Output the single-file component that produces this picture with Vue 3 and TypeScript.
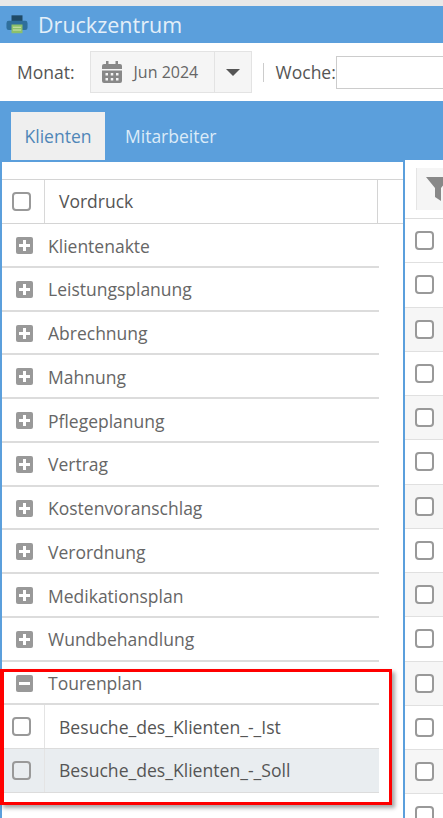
<template>
  <div class="page">
    <div class="title-bar">
      <svg class="printer" width="22" height="21" viewBox="0 0 24 22">
        <rect x="6" y="1" width="12" height="8" fill="#1f4a66" />
        <path d="M3 7h18a2.500 2.500 0 0 1 2.500 2.500v5a2.500 2.500 0 0 1-2.500 2.500H3a2.500 2.500 0 0 1-2.500-2.500v-5A2.500 2.500 0 0 1 3 7z" fill="#2f6f9c" />
        <rect x="6" y="11" width="12" height="9.500" fill="#8cc06a" />
        <path d="M7.500 14h9M7.500 17h9" stroke="#d5e8b5" stroke-width="1" />
      </svg>
      <span class="title">Druckzentrum</span>
    </div>

    <div class="filter-bar">
      <label class="filter-label">Monat:</label>
      <div class="month-picker">
        <div class="month-value">
          <svg width="20" height="22" viewBox="0 0 20 22" fill="#888">
            <path d="M4 0h2.500v3h7V0H16v3h2a2 2 0 0 1 2 2v3H0V5a2 2 0 0 1 2-2h2z" />
            <path fill-rule="evenodd" d="M0 9.500h20V20a2 2 0 0 1-2 2H2a2 2 0 0 1-2-2zM3.500 12v2.500H6V12zm5.250 0v2.500h2.500V12zM14 12v2.500h2.500V12zM3.500 17v2.500H6V17zm5.250 0v2.500h2.500V17zM14 17v2.500h2.500V17z" />
          </svg>
          <span>Jun 2024</span>
        </div>
        <div class="month-toggle"><span class="caret"></span></div>
      </div>
      <span class="separator"></span>
      <label class="filter-label week-label">Woche:</label>
      <input class="week-input" type="text" />
    </div>

    <div class="tab-bar">
      <div class="tab active">Klienten</div>
      <div class="tab">Mitarbeiter</div>
    </div>

    <div class="content">
      <div class="left-panel">
        <div class="grid-head">
          <div class="check-cell"><span class="check"></span></div>
          <div class="head-title">Vordruck</div>
          <div class="head-end"></div>
        </div>

        <div v-for="group in groups" :key="group" class="group-row">
          <span class="toggle">
            <span class="bar-h"></span>
            <span class="bar-v"></span>
          </span>
          <span>{{ group }}</span>
        </div>

        <div class="group-row">
          <span class="toggle"><span class="bar-h"></span></span>
          <span>Tourenplan</span>
        </div>
        <div
          v-for="(item, index) in items"
          :key="item"
          class="item-row"
          :class="{ hovered: index === 1 }"
        >
          <div class="check-cell"><span class="check"></span></div>
          <div class="item-name">{{ item }}</div>
        </div>

        <div class="highlight-box"></div>
      </div>

      <div class="right-panel">
        <div class="toolbar">
          <div class="filter-btn">
            <svg width="24" height="24" viewBox="0 0 24 24" fill="#888">
              <path d="M0 0h24L15 11v13l-6-4V11z" />
            </svg>
          </div>
        </div>
        <div v-for="n in 14" :key="n" class="right-row" :class="{ striped: n > 2 && n % 2 === 1 }">
          <span class="check"></span>
        </div>
      </div>
    </div>
  </div>
</template>

<script setup lang="ts">
const groups: string[] = [
  'Klientenakte',
  'Leistungsplanung',
  'Abrechnung',
  'Mahnung',
  'Pflegeplanung',
  'Vertrag',
  'Kostenvoranschlag',
  'Verordnung',
  'Medikationsplan',
  'Wundbehandlung'
]

const items: string[] = ['Besuche_des_Klienten_-_Ist', 'Besuche_des_Klienten_-_Soll']
</script>

<style>
html,
body {
  margin: 0;
  height: 100%;
  overflow: hidden;
  background: #fff;
}
</style>

<style scoped>
.page {
  width: 443px;
  height: 818px;
  overflow: hidden;
  padding-top: 6px;
  box-sizing: border-box;
  background: #e8e8e8;
  font-family: "Open Sans", "Liberation Sans", sans-serif;
  color: #555;
}

.title-bar {
  display: flex;
  align-items: center;
  gap: 10px;
  height: 37px;
  padding-left: 6px;
  background: #5b9fdc;
}

.printer {
  flex-shrink: 0;
}

.title {
  font-size: 21.5px;
  color: #e4eff9;
}

.filter-bar {
  display: flex;
  align-items: center;
  height: 58px;
  padding-left: 17px;
  background: #fff;
  white-space: nowrap;
}

.filter-label {
  font-size: 17.5px;
  color: #555;
}

.month-picker {
  display: flex;
  height: 42px;
  margin-left: 15px;
  flex-shrink: 0;
  box-sizing: border-box;
  border: 1px solid #e3e3e3;
  background: #f5f5f5;
}

.month-value {
  display: flex;
  align-items: center;
  gap: 12px;
  width: 124px;
  padding-left: 11px;
  box-sizing: border-box;
  border-right: 1px solid #e3e3e3;
  font-size: 16px;
  color: #666;
}

.month-toggle {
  display: flex;
  align-items: center;
  justify-content: center;
  width: 36px;
}

.caret {
  width: 0;
  height: 0;
  border-left: 7px solid transparent;
  border-right: 7px solid transparent;
  border-top: 7px solid #555;
}

.separator {
  width: 1px;
  height: 19px;
  margin: 0 12px 0 11px;
  flex-shrink: 0;
  background: #ccc;
}

.week-label {
  flex-shrink: 0;
}

.week-input {
  flex-shrink: 0;
  width: 200px;
  height: 33px;
  margin: 0;
  padding: 0;
  box-sizing: border-box;
  border: 1px solid #ccc;
  background: #fff;
  outline: none;
}

.tab-bar {
  display: flex;
  align-items: flex-start;
  gap: 1px;
  height: 61px;
  padding: 11px 0 0 11px;
  box-sizing: border-box;
  background: #5b9fdc;
}

.tab {
  display: flex;
  align-items: center;
  justify-content: center;
  height: 48px;
  padding: 0 19px;
  font-size: 17.5px;
  color: #dcebf8;
}

.tab.active {
  width: 94px;
  padding: 0;
  background: #efefef;
  color: #4f86b8;
}

.content {
  display: flex;
  height: 656px;
  background: #fff;
}

.left-panel {
  position: relative;
  width: 403px;
  padding-top: 17px;
  box-sizing: border-box;
  border-left: 2px solid #5b9fdc;
  background: #fff;
  flex-shrink: 0;
}

.grid-head {
  display: flex;
  height: 45px;
  box-sizing: border-box;
  border-top: 1px solid #d4d4d4;
  border-bottom: 1px solid #d4d4d4;
}

.check-cell {
  display: flex;
  align-items: center;
  justify-content: center;
  width: 43px;
  padding-right: 4px;
  box-sizing: border-box;
  flex-shrink: 0;
  border-right: 1px solid #d8d8d8;
}

.check {
  display: block;
  width: 19px;
  height: 19px;
  box-sizing: border-box;
  border: 2px solid #999;
  border-radius: 4px;
  background: #fff;
}

.head-title {
  display: flex;
  align-items: center;
  width: 333px;
  padding: 0 0 2px 14px;
  box-sizing: border-box;
  border-right: 1px solid #d4d4d4;
  font-size: 17.5px;
  color: #555;
}

.head-end {
  flex: 1;
}

.group-row {
  display: flex;
  align-items: center;
  gap: 15px;
  width: 377px;
  height: 43.75px;
  padding: 1.5px 0 0 14px;
  box-sizing: border-box;
  border-bottom: 2px solid #dcdcdc;
  font-size: 17.5px;
  color: #666;
}

.toggle {
  position: relative;
  display: block;
  width: 17px;
  height: 17px;
  flex-shrink: 0;
  border-radius: 2px;
  background: #999;
}

.bar-h,
.bar-v {
  position: absolute;
  background: #fff;
}

.bar-h {
  left: 3px;
  top: 7px;
  width: 11px;
  height: 3px;
}

.bar-v {
  left: 7px;
  top: 3px;
  width: 3px;
  height: 11px;
}

.item-row {
  display: flex;
  width: 377px;
  height: 43.75px;
  box-sizing: border-box;
  border-bottom: 1px solid #dcdcdc;
  font-size: 17.6px;
  color: #555;
}

.item-row .check-cell {
  border-right-color: #e4e4e4;
}

.item-row.hovered {
  background: #e9edf0;
}

.item-row.hovered .check {
  background: transparent;
}

.item-name {
  display: flex;
  align-items: center;
  padding-left: 14px;
}

.highlight-box {
  position: absolute;
  left: -2px;
  top: 507px;
  width: 392px;
  height: 136px;
  box-sizing: border-box;
  border: 3px solid #f00;
  border-left-width: 4px;
  box-shadow: 3px 3px 4px rgba(0, 0, 0, 0.35);
  pointer-events: none;
}

.right-panel {
  flex: 1;
  min-width: 0;
  overflow: hidden;
  border-left: 2px solid #5b9fdc;
  margin-top: -2px;
  background: #fff;
}

.toolbar {
  height: 59px;
  padding: 8px 0 0 11px;
  box-sizing: border-box;
  border-bottom: 1px solid #ddd;
}

.filter-btn {
  display: flex;
  align-items: center;
  width: 40px;
  height: 42px;
  padding-left: 9px;
  box-sizing: border-box;
  border-left: 1px solid #e5e5e5;
  background: #f5f5f5;
}

.right-row {
  display: flex;
  align-items: center;
  height: 44.25px;
  padding-left: 10px;
  box-sizing: border-box;
  border-bottom: 1px solid #e0e0e0;
}

.right-row.striped {
  background: #f6f6f6;
}
</style>
